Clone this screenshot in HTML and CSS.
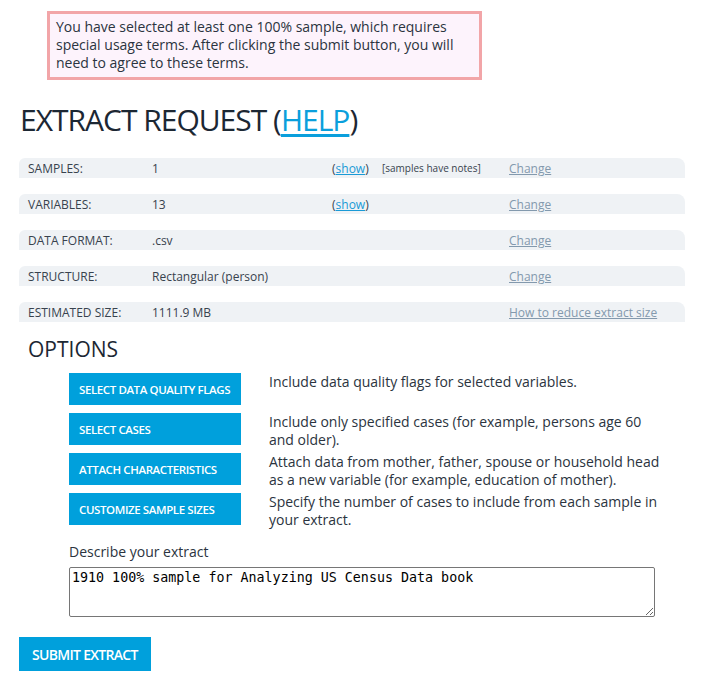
FILE: index.html
```html
<!DOCTYPE html>
<html>
<head>
<meta charset="utf-8">
<link rel="stylesheet" href="styles.css">
</head>
<body>
<div class="page">
  <div class="notice">You have selected at least one 100% sample, which requires special usage terms. After clicking the submit button, you will need to agree to these terms.</div>

  <h1 class="title">EXTRACT REQUEST (<a href="#" class="help">HELP</a>)</h1>

  <div class="summary">
    <div class="row">
      <span class="label">SAMPLES:</span>
      <span class="value">1</span>
      <span class="show">(<a href="#">show</a>)</span>
      <span class="note">[samples have notes]</span>
      <a href="#" class="change">Change</a>
    </div>
    <div class="row">
      <span class="label">VARIABLES:</span>
      <span class="value">13</span>
      <span class="show">(<a href="#">show</a>)</span>
      <span class="note"></span>
      <a href="#" class="change">Change</a>
    </div>
    <div class="row">
      <span class="label">DATA FORMAT:</span>
      <span class="value">.csv</span>
      <span class="show"></span>
      <span class="note"></span>
      <a href="#" class="change">Change</a>
    </div>
    <div class="row">
      <span class="label">STRUCTURE:</span>
      <span class="value">Rectangular (person)</span>
      <span class="show"></span>
      <span class="note"></span>
      <a href="#" class="change">Change</a>
    </div>
    <div class="row">
      <span class="label">ESTIMATED SIZE:</span>
      <span class="value">1111.9 MB</span>
      <span class="show"></span>
      <span class="note"></span>
      <a href="#" class="change">How to reduce extract size</a>
    </div>
  </div>

  <h2 class="options-title">OPTIONS</h2>

  <div class="options">
    <button class="opt-btn">SELECT DATA QUALITY FLAGS</button>
    <p class="opt-desc">Include data quality flags for selected variables.</p>
    <button class="opt-btn">SELECT CASES</button>
    <p class="opt-desc">Include only specified cases (for example, persons age 60 and older).</p>
    <button class="opt-btn">ATTACH CHARACTERISTICS</button>
    <p class="opt-desc">Attach data from mother, father, spouse or household head as a new variable (for example, education of mother).</p>
    <button class="opt-btn">CUSTOMIZE SAMPLE SIZES</button>
    <p class="opt-desc">Specify the number of cases to include from each sample in your extract.</p>
  </div>

  <div class="describe">
    <label class="describe-label" for="desc">Describe your extract</label>
    <textarea id="desc" class="describe-input">1910 100% sample for Analyzing US Census Data book</textarea>
  </div>

  <button class="submit">SUBMIT EXTRACT</button>
</div>
</body>
</html>
```

FILE: styles.css
```css
html, body {
  margin: 0;
  padding: 0;
  background: #fff;
}
body {
  font-family: "Open Sans", "Noto Sans", sans-serif;
  color: #2b3440;
}
.page {
  padding: 11px 35px 8px 19px;
}
.notice {
  margin-left: 28px;
  width: 417px;
  border: 3px solid #f2a5a8;
  background: #fdf3fc;
  padding: 4px 6px 5px;
  font-size: 14px;
  line-height: 18px;
}
.title {
  margin: 22px 0 0 1px;
  font-size: 30px;
  line-height: 36px;
  font-weight: 400;
  color: #1c2733;
  letter-spacing: -1px;
}
.help {
  color: #0a9fdc;
  text-decoration: underline;
  text-underline-offset: 3px;
}
.summary {
  margin-top: 20px;
  display: flex;
  flex-direction: column;
  gap: 16px;
}
.row {
  display: grid;
  grid-template-columns: 124px 180px 50px 127px 1fr;
  align-items: center;
  height: 20px;
  background: #eff2f5;
  border-radius: 6px 8px 0 0;
  padding-left: 9px;
  font-size: 12px;
  color: #38424e;
}
.show a {
  color: #1a9ad6;
}
.note {
  font-size: 10px;
}
.change {
  color: #8399ad;
  justify-self: start;
}
.options-title {
  margin: 13px 0 0 9px;
  font-size: 21px;
  line-height: 28px;
  font-weight: 400;
  color: #1c2733;
}
.options {
  margin: 10px 0 0 50px;
  display: grid;
  grid-template-columns: 172px 395px;
  column-gap: 28px;
  align-items: start;
}
.opt-btn {
  height: 32px;
  margin-bottom: 8px;
  border: 0;
  background: #00a0dc;
  color: #fff;
  font-family: inherit;
  font-size: 11.5px;
  font-weight: 600;
  text-align: left;
  padding: 0 10px;
  letter-spacing: -0.4px;
  white-space: nowrap;
}
.opt-desc {
  margin: 0;
  font-size: 14px;
  line-height: 18px;
}
.describe {
  margin: 10px 0 0 50px;
  display: flex;
  flex-direction: column;
}
.describe-label {
  font-size: 14px;
  line-height: 18px;
}
.describe-input {
  margin-top: 6px;
  width: 580px;
  height: 44px;
  font-family: "DejaVu Sans Mono", monospace;
  font-size: 13.33px;
  color: #000;
  border: 1px solid #767676;
  border-radius: 2px;
  padding: 2px;
}
.submit {
  margin-top: 20px;
  height: 34px;
  border: 0;
  background: #00a0dc;
  color: #fff;
  font-family: inherit;
  font-size: 14px;
  font-weight: 600;
  padding: 0 13px;
  letter-spacing: -0.7px;
}
```
